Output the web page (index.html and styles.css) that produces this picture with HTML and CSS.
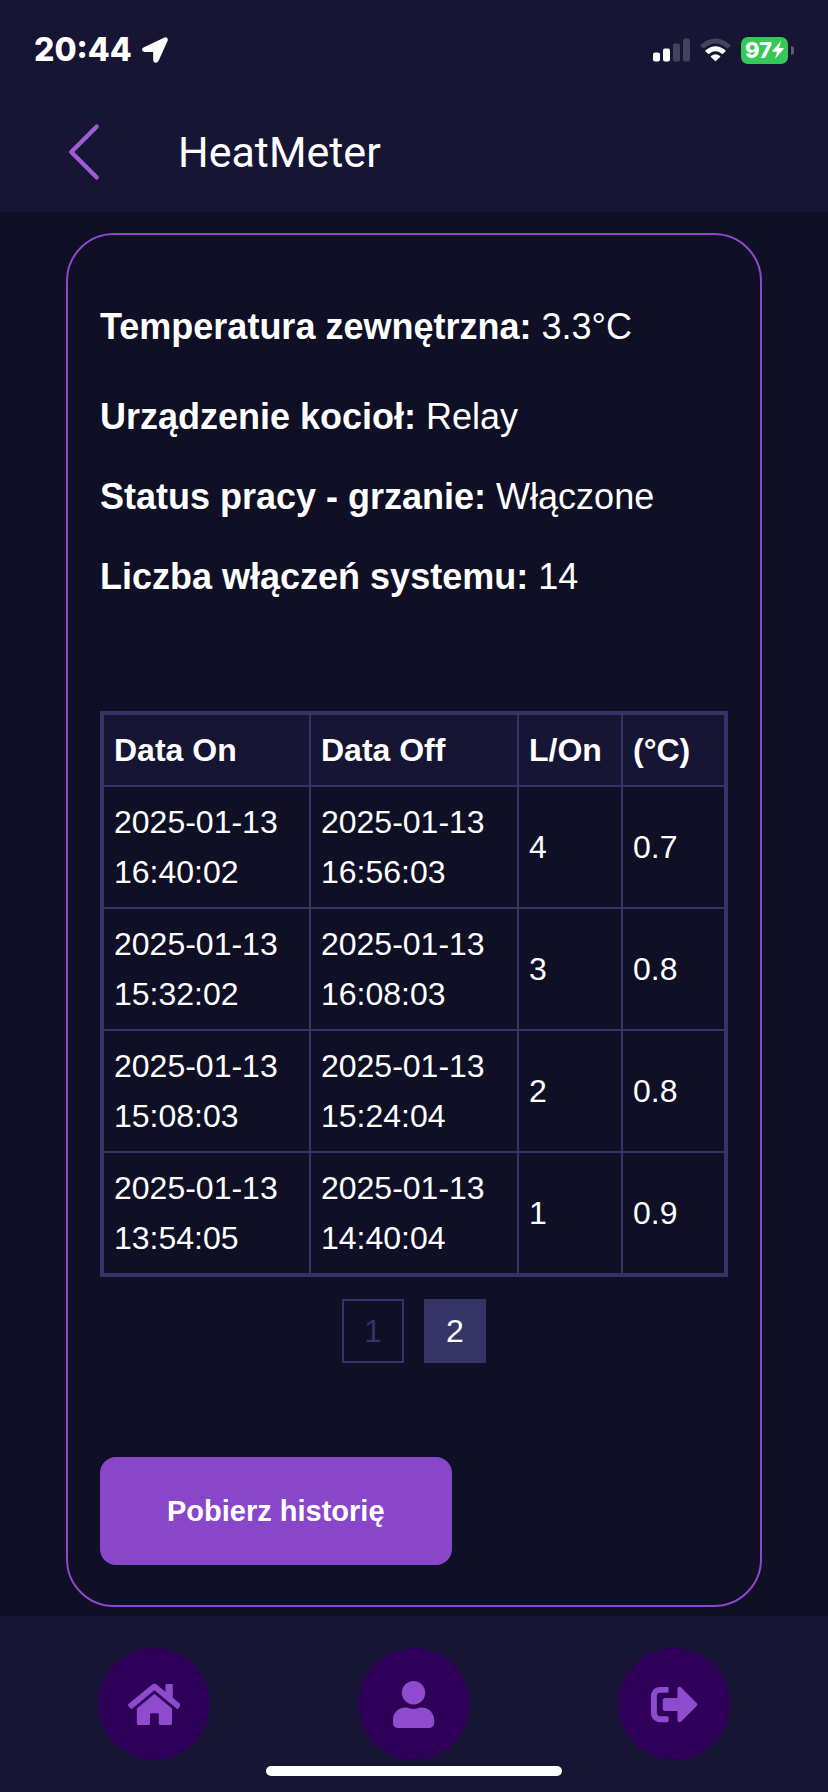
FILE: index.html
```html
<!DOCTYPE html>
<html lang="pl">
<head>
<meta charset="utf-8">
<meta name="viewport" content="width=device-width, initial-scale=1">
<title>HeatMeter</title>
<link rel="stylesheet" href="styles.css">
</head>
<body>
<div class="app">
  <header class="header">
    <div class="status">
      <div class="status-group">
        <span class="clock">20:44</span>
        <svg class="location" viewBox="0 0 26 26" aria-hidden="true"><path d="M1.500 10.500 22.500 .5Q26-.6 25.800 3.300L16.500 24Q15.500 26 13.500 25.800 11.300 25.500 11.200 23.200V15H2.500Q.3 14.600 0 12.800-.1 11.300 1.500 10.500Z"/></svg>
      </div>
      <div class="status-group">
        <svg class="signal" viewBox="0 0 37 24" aria-hidden="true"><rect y="14.500" width="7" height="9" rx="2"/><rect x="10" y="10.500" width="7" height="13" rx="2"/><g class="dim"><rect x="20" y="5.500" width="7" height="18" rx="2"/><rect x="30" y=".5" width="7" height="23" rx="2"/></g></svg>
        <svg class="wifi" viewBox="0 0 32 24" aria-hidden="true"><path class="dim" d="M.6 6.800Q16-6.400 31.400 6.800Q32 7.500 31.300 8.200L29 10.300Q28.400 10.700 27.800 10.200Q16 .4 4.200 10.200Q3.600 10.700 3 10.300L.7 8.200Q0 7.500 .6 6.800Z"/><path d="M5.800 12.200Q16 4.200 26.200 12.200Q26.800 12.900 26.200 13.500L23.700 15.800Q23.100 16.300 22.500 15.800Q16 10.900 9.500 15.800Q8.900 16.300 8.300 15.800L5.800 13.500Q5.200 12.900 5.800 12.200Z"/><path d="M11.300 18.100Q16 14.900 20.700 18.100Q21.200 18.700 20.700 19.300L16.700 23.200Q16 23.800 15.300 23.200L11.300 19.300Q10.800 18.700 11.300 18.100Z"/></svg>
        <div class="battery">
          <span class="battery-level">97<svg class="bolt" viewBox="0 0 12 18" aria-hidden="true"><path d="M9 0 .3 10Q0 10.700 .8 10.700H5L3 18 11.700 7.800Q12 7.100 11.200 7.100H7Z"/></svg></span>
          <span class="battery-cap"></span>
        </div>
      </div>
    </div>
    <div class="title-bar">
      <button class="back" type="button" aria-label="Wstecz"><svg viewBox="0 0 16 16" aria-hidden="true"><path d="M11.354 1.646a.5.5 0 0 1 0 .708L5.707 8l5.647 5.646a.5.5 0 0 1-.708.708l-6-6a.5.5 0 0 1 0-.708l6-6a.5.5 0 0 1 .708 0z"/></svg></button>
      <h1 class="title">HeatMeter</h1>
    </div>
  </header>

  <main class="card">
    <div class="readings">
      <p class="reading reading-lead"><strong>Temperatura zewnętrzna:</strong> 3.3°C</p>
      <p class="reading"><strong>Urządzenie kocioł:</strong> Relay</p>
      <p class="reading"><strong>Status pracy - grzanie:</strong> Włączone</p>
      <p class="reading"><strong>Liczba włączeń systemu:</strong> 14</p>
    </div>

    <table class="history">
      <colgroup><col class="col-date"><col class="col-date"><col class="col-value"><col class="col-value"></colgroup>
      <thead>
        <tr><th scope="col">Data On</th><th scope="col">Data Off</th><th scope="col">L/On</th><th scope="col">(°C)</th></tr>
      </thead>
      <tbody>
        <tr><td>2025-01-13 16:40:02</td><td>2025-01-13 16:56:03</td><td>4</td><td>0.7</td></tr>
        <tr><td>2025-01-13 15:32:02</td><td>2025-01-13 16:08:03</td><td>3</td><td>0.8</td></tr>
        <tr><td>2025-01-13 15:08:03</td><td>2025-01-13 15:24:04</td><td>2</td><td>0.8</td></tr>
        <tr><td>2025-01-13 13:54:05</td><td>2025-01-13 14:40:04</td><td>1</td><td>0.9</td></tr>
      </tbody>
    </table>

    <div class="pager">
      <button class="page" type="button">1</button>
      <button class="page page-active" type="button" aria-current="page">2</button>
    </div>

    <button class="download" type="button">Pobierz historię</button>
  </main>

  <nav class="nav">
    <div class="nav-items">
      <a class="nav-link" href="#home" aria-label="Start"><svg viewBox="0 0 576 512" aria-hidden="true"><path d="M280.370 148.260L96 300.110V464a16 16 0 0 0 16 16l112.060-.29a16 16 0 0 0 15.920-16V368a16 16 0 0 1 16-16h64a16 16 0 0 1 16 16v95.640a16 16 0 0 0 16 16.050L464 480a16 16 0 0 0 16-16V300L295.670 148.260a12.190 12.190 0 0 0-15.300 0zM571.600 251.470L488 182.560V44.050a12 12 0 0 0-12-12h-56a12 12 0 0 0-12 12v72.610L318.470 43a48 48 0 0 0-61 0L4.340 251.470a12 12 0 0 0-1.600 16.900l25.500 31A12 12 0 0 0 45.150 301l235.220-193.740a12.190 12.190 0 0 1 15.300 0L530.900 301a12 12 0 0 0 16.900-1.600l25.500-31a12 12 0 0 0-1.700-16.930z"/></svg></a>
      <a class="nav-link" href="#profile" aria-label="Profil"><svg viewBox="0 0 448 512" aria-hidden="true"><path d="M224 256c70.700 0 128-57.300 128-128S294.700 0 224 0 96 57.300 96 128s57.300 128 128 128zm89.600 32h-16.700c-22.200 10.200-46.900 16-72.900 16s-50.600-5.800-72.900-16h-16.700C60.200 288 0 348.200 0 422.400V464c0 26.500 21.500 48 48 48h352c26.500 0 48-21.500 48-48v-41.600c0-74.200-60.200-134.400-134.400-134.400z"/></svg></a>
      <a class="nav-link" href="#logout" aria-label="Wyloguj"><svg viewBox="0 0 512 512" aria-hidden="true"><path d="M497 273L329 441c-15 15-41 4.500-41-17v-96H152c-13.300 0-24-10.700-24-24v-96c0-13.300 10.700-24 24-24h136V88c0-21.400 25.900-32 41-17l168 168c9.300 9.400 9.300 24.600 0 34zM192 436v-40c0-6.600-5.400-12-12-12H96c-17.700 0-32-14.300-32-32V160c0-17.700 14.300-32 32-32h84c6.600 0 12-5.400 12-12V76c0-6.600-5.400-12-12-12H96c-53 0-96 43-96 96v192c0 53 43 96 96 96h84c6.600 0 12-5.400 12-12z"/></svg></a>
    </div>
    <div class="home-indicator"></div>
  </nav>
</div>
</body>
</html>
```

FILE: styles.css
```css
* {
  box-sizing: border-box;
}

body {
  margin: 0;
  background: #0f0f26;
  color: #fff;
  font-family: "Liberation Sans", Arial, Helvetica, sans-serif;
}

button {
  font-family: inherit;
  cursor: pointer;
}

.app {
  display: flex;
  flex-direction: column;
  min-height: 100vh;
}

.header {
  background: #161533;
  padding-bottom: 8px;
}

.status {
  display: flex;
  align-items: center;
  justify-content: space-between;
  height: 100px;
  padding: 0 34px;
}

.status-group {
  display: flex;
  align-items: center;
  gap: 10px;
}

.status svg {
  display: block;
  fill: #fff;
}

.status .dim {
  fill: #45435c;
}

.clock {
  font-family: Inter, sans-serif;
  font-size: 32px;
  font-weight: 800;
  line-height: 40px;
}

.location {
  width: 26px;
  height: 26px;
}

.signal {
  width: 37px;
  height: 24px;
}

.wifi {
  width: 31px;
  height: 24px;
}

.battery {
  display: flex;
  align-items: center;
  gap: 3px;
}

.battery-level {
  display: flex;
  align-items: center;
  justify-content: center;
  width: 47px;
  height: 27px;
  border-radius: 7px;
  background: #34c759;
  font-family: Inter, sans-serif;
  font-size: 22px;
  font-weight: 800;
  line-height: 27px;
}

.bolt {
  width: 12px;
  height: 18px;
}

.battery-cap {
  width: 3px;
  height: 9px;
  border-radius: 0 4px 4px 0;
  background: #5d5b71;
}

.title-bar {
  display: flex;
  align-items: center;
  gap: 60px;
  height: 104px;
  padding: 0 50px;
}

.back {
  padding: 0;
  border: 0;
  background: none;
}

.back svg {
  display: block;
  width: 68px;
  height: 68px;
  fill: #a05bd6;
}

.title {
  margin: 0;
  font-family: Roboto, sans-serif;
  font-size: 43px;
  font-weight: 400;
  line-height: 52px;
}

.card {
  margin: 21px 66px 9px;
  padding: 65px 32px 40px;
  border: 2px solid #8c49cb;
  border-radius: 48px;
}

.readings {
  margin-bottom: 107px;
}

.reading {
  margin: 0 0 26px;
  font-size: 36px;
  line-height: 54px;
}

.reading-lead {
  margin-bottom: 36px;
}

.reading:last-child {
  margin-bottom: 0;
}

.history {
  width: 100%;
  table-layout: fixed;
  border: 4px solid #363366;
  border-collapse: collapse;
  font-size: 32px;
  line-height: 50px;
  text-align: left;
}

.col-date {
  width: 33.33%;
}

.history th,
.history td {
  padding: 10px;
  border: 2px solid #363366;
}

.history th {
  background: #161533;
}

.pager {
  display: flex;
  justify-content: center;
  gap: 20px;
  margin-top: 22px;
}

.page {
  width: 62px;
  height: 64px;
  padding: 0;
  border: 2px solid #363366;
  background: none;
  color: #363366;
  font-size: 32px;
  line-height: 50px;
}

.page-active {
  background: #363366;
  color: #fff;
}

.download {
  display: block;
  margin-top: 94px;
  padding: 36px 67px;
  border: 0;
  border-radius: 16px;
  background: #8a46ca;
  color: #fff;
  font-size: 29px;
  font-weight: 700;
  line-height: 36px;
}

.nav {
  display: flex;
  flex-direction: column;
  align-items: center;
  gap: 6px;
  margin-top: auto;
  padding: 32px 24px 16px;
  background: #161533;
}

.nav-items {
  display: flex;
  justify-content: space-around;
  width: 100%;
}

.nav-link {
  display: flex;
  align-items: center;
  justify-content: center;
  width: 112px;
  height: 112px;
  border-radius: 50%;
  background: #2e0059;
}

.nav-link svg {
  height: 47px;
  fill: #8e4bcd;
}

.home-indicator {
  width: 38%;
  max-width: 296px;
  height: 10px;
  border-radius: 5px;
  background: #fff;
}
```
